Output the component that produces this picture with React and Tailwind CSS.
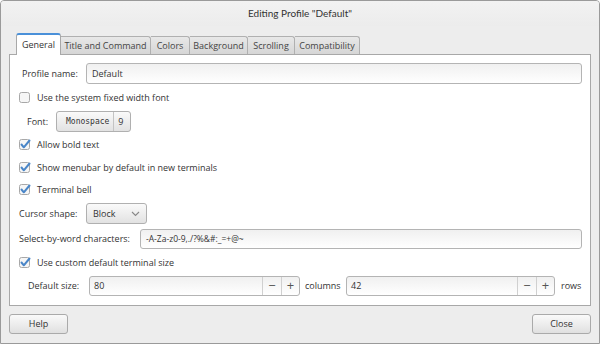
import React from 'react';

const font = { fontFamily: '"Open Sans", "Liberation Sans", sans-serif' };

const Check = ({ checked }) => (
  <svg width="12" height="12" viewBox="0 0 12 12" className="shrink-0">
    <rect x="0.5" y="0.5" width="10" height="10" rx="2" fill="#f6f6f6" stroke="#a8a8a8" />
    {checked && (
      <path d="M2.5 5.5 L4.8 8.3 L10.5 1.5" fill="none" stroke="#4a86c8" strokeWidth="2" strokeLinecap="round" strokeLinejoin="round" />
    )}
  </svg>
);

const CheckRow = ({ label, checked, mt }) => (
  <div className={`flex items-center h-4 gap-[6px] pl-[9px] ${mt}`}>
    <Check checked={checked} />
    <span className="whitespace-nowrap">{label}</span>
  </div>
);

const Entry = ({ value, className }) => (
  <div className={`h-full flex items-center px-[5px] rounded-[3px] border border-[#b4b4b4] bg-gradient-to-b from-[#f0f0f0] to-white ${className}`}>
    {value}
  </div>
);

const Spin = ({ value, className }) => (
  <div className={`h-[20px] shrink-0 flex items-stretch rounded-[3px] border border-[#b4b4b4] bg-gradient-to-b from-[#f0f0f0] to-white ${className}`}>
    <div className="flex-1 flex items-center px-[4px]">{value}</div>
    <div className="w-[19px] flex items-center justify-center border-l border-[#d0d0d0] text-[#555] text-[13px]">−</div>
    <div className="w-[18px] flex items-center justify-center border-l border-[#d0d0d0] text-[#555] text-[13px]">+</div>
  </div>
);

const tabs = [
  ['Title and Command', 'w-[90px]'],
  ['Colors', 'w-[39px]'],
  ['Background', 'w-[58px]'],
  ['Scrolling', 'w-[47px]'],
  ['Compatibility', 'w-[65px]'],
];

const label = 'whitespace-nowrap shrink-0';

export default function App() {
  return (
    <div className="w-[600px] h-[344px] bg-[#ededed] text-[9px] text-[#333] border border-[#9a9a9a] rounded-t-[4px] flex flex-col overflow-hidden" style={font}>
      {/* title bar */}
      <div className="h-[25px] flex items-center justify-center text-[10px] text-[#333] bg-gradient-to-b from-[#f2f2f2] to-[#ececec]" style={{ fontFamily: 'Lato, sans-serif' }}>
        Editing Profile "Default"
      </div>

      <div className="px-[8px] flex flex-col">
        {/* tabs */}
        <div className="flex items-end h-[22px] pl-[7px] mt-[6px]">
          <div className="h-[22px] w-[45px] flex items-center justify-center bg-white border border-[#a8a8a8] border-b-0 border-t-2 border-t-[#4a90d9] rounded-t-[3px] -mb-px relative z-10">
            General
          </div>
          {tabs.map(([t, w]) => (
            <div key={t} className={`h-[18px] ${w} whitespace-nowrap flex items-center justify-center text-[#444] bg-gradient-to-b from-[#e8e8e8] to-[#d6d6d6] border border-[#b0b0b0] border-b-0 border-l-0 rounded-tr-[3px]`}>
              {t}
            </div>
          ))}
        </div>

        {/* panel */}
        <div className="h-[252px] bg-white border border-[#a8a8a8] flex flex-col pr-[8px]">
          <div className="flex items-center h-[21px] mt-[8px] pl-[12px]">
            <span className={`w-[64px] ${label}`}>Profile name:</span>
            <Entry value="Default" className="flex-1" />
          </div>

          <CheckRow label="Use the system fixed width font" mt="mt-[6px]" />

          <div className="flex items-center h-[21px] mt-[5px] pl-[17px]">
            <span className={`w-[29px] ${label}`}>Font:</span>
            <div className="h-full w-[75px] flex items-center rounded-[3px] border border-[#b0b0b0] bg-gradient-to-b from-[#fafafa] to-[#e2e2e2] text-[#333]">
              <span className="pl-[9px] pr-[4px] h-full flex items-center border-r border-[#c4c4c4]" style={{ fontFamily: '"DejaVu Sans Mono", monospace', fontSize: '8px' }}>Monospace</span>
              <span className="pl-[4px]">9</span>
            </div>
          </div>

          <CheckRow label="Allow bold text" checked mt="mt-[5px]" />
          <CheckRow label="Show menubar by default in new terminals" checked mt="mt-[7px]" />
          <CheckRow label="Terminal bell" checked mt="mt-[6px]" />

          <div className="flex items-center h-[21px] mt-[5px] pl-[9px]">
            <span className={`w-[67px] ${label}`}>Cursor shape:</span>
            <div className="h-full w-[61px] flex items-center justify-between px-[6px] rounded-[3px] border border-[#b0b0b0] bg-gradient-to-b from-[#fafafa] to-[#e2e2e2]">
              <span>Block</span>
              <svg width="9" height="6" viewBox="0 0 9 6">
                <path d="M1 1 L4.5 4.5 L8 1" fill="none" stroke="#888" strokeWidth="1.1" />
              </svg>
            </div>
          </div>

          <div className="flex items-center h-[20px] mt-[5px] pl-[9px]">
            <span className={`w-[121px] ${label}`}>Select-by-word characters:</span>
            <Entry value="-A-Za-z0-9,./?%&#:_=+@~" className="flex-1 text-[8.5px]" />
          </div>

          <CheckRow label="Use custom default terminal size" checked mt="mt-[6px]" />

          <div className="flex items-center h-[20px] mt-[5px] pl-[18px]">
            <span className={`w-[61px] ${label}`}>Default size:</span>
            <Spin value="80" className="w-[211px]" />
            <span className={`px-[5px] w-[46px] ${label}`}>columns</span>
            <Spin value="42" className="w-[209px]" />
            <span className={`pl-[6px] ${label}`}>rows</span>
          </div>
        </div>

        {/* footer */}
        <div className="flex justify-between mt-[8px]">
          <button className="h-[20px] w-[59px] rounded-[3px] border border-[#aaa] bg-gradient-to-b from-[#fafafa] to-[#e0e0e0] text-[#333]">Help</button>
          <button className="h-[20px] w-[59px] rounded-[3px] border border-[#aaa] bg-gradient-to-b from-[#fafafa] to-[#e0e0e0] text-[#333]">Close</button>
        </div>
      </div>
    </div>
  );
}
